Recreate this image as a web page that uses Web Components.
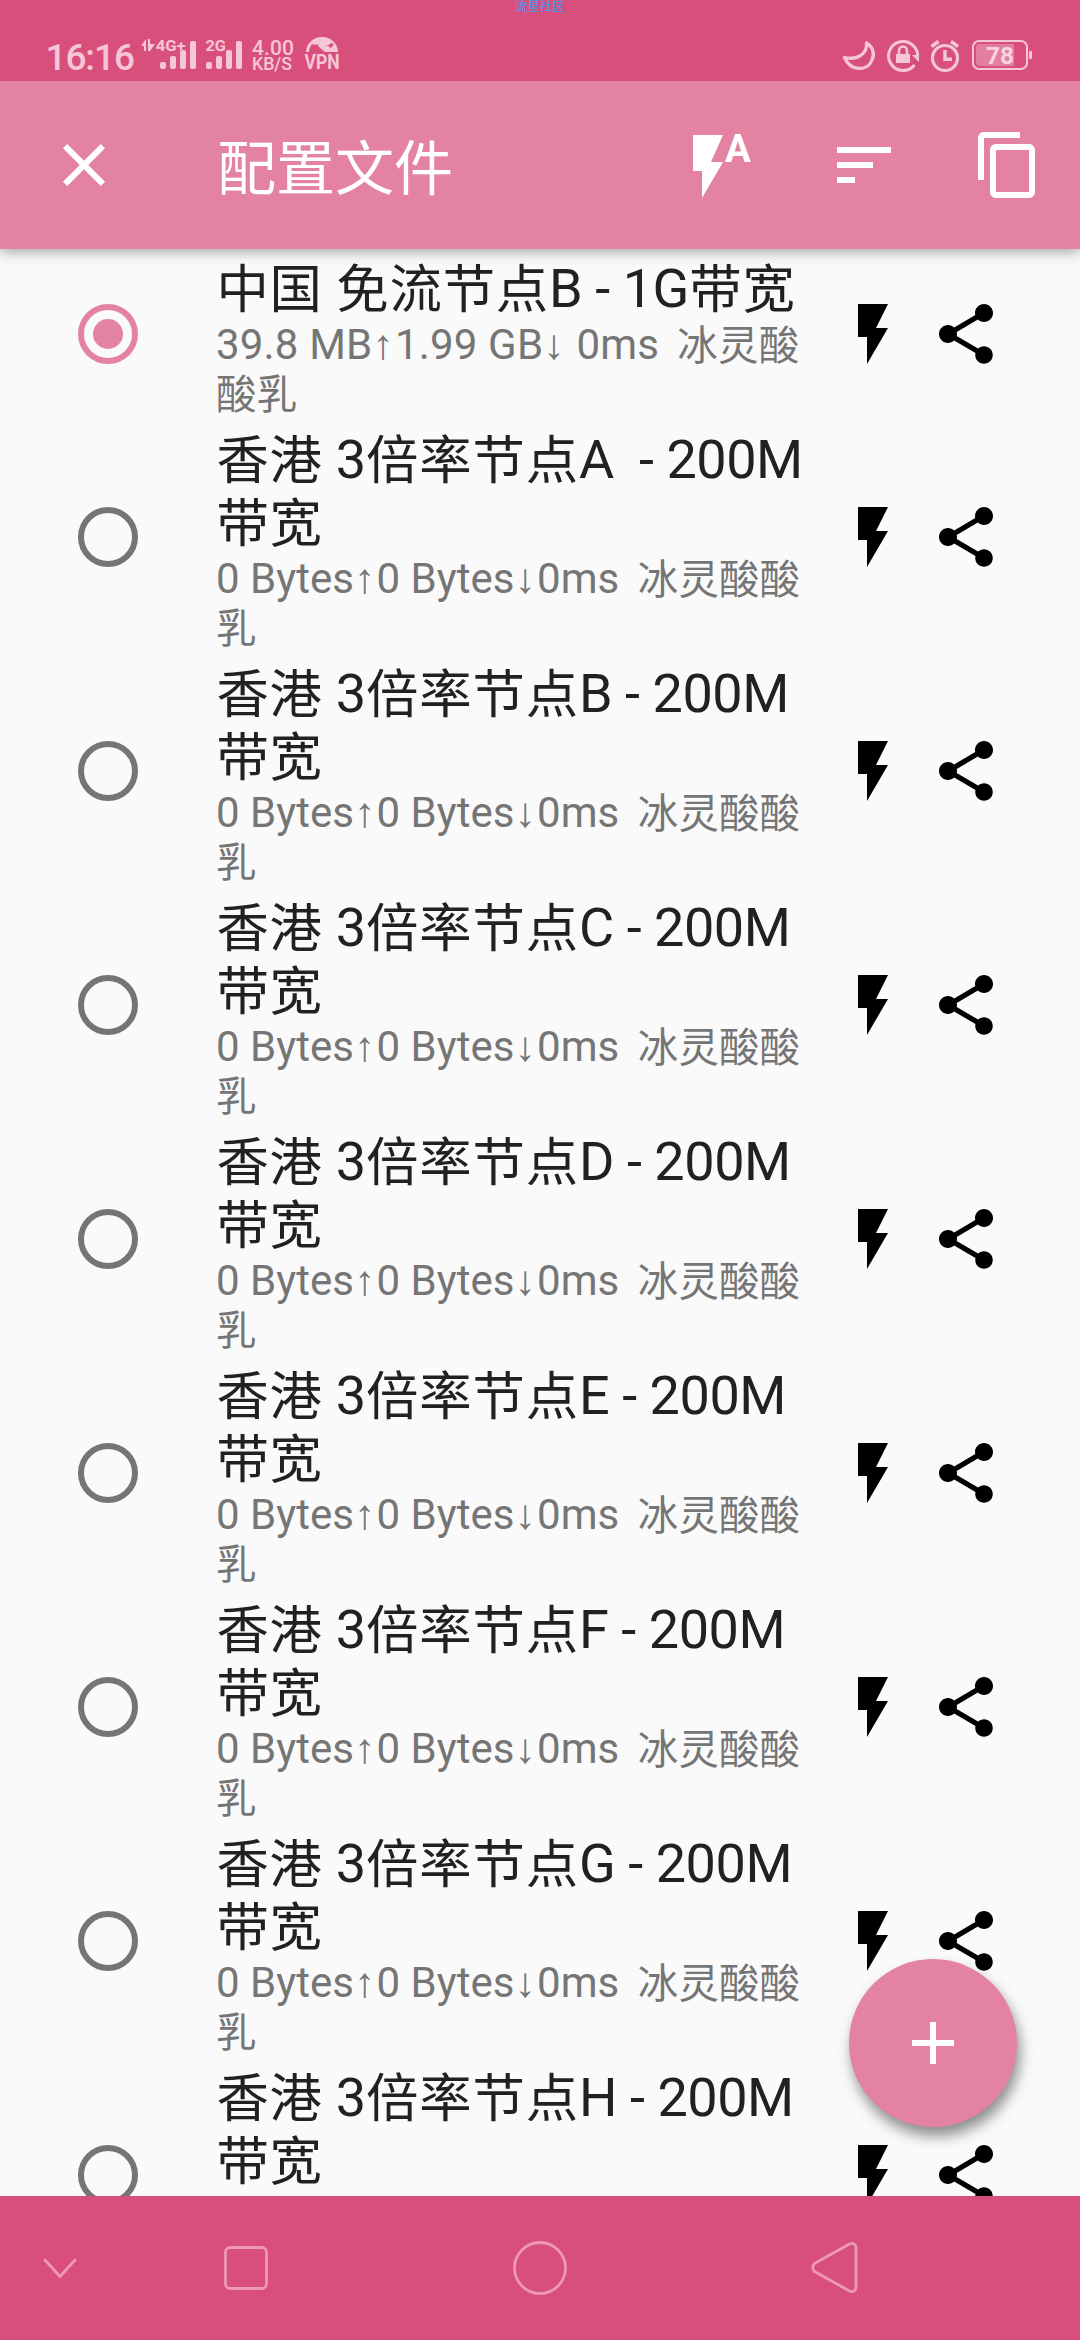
<!DOCTYPE html>
<html lang="zh-CN">
<head>
<meta charset="utf-8">
<title>配置文件</title>
<style>
html,body{margin:0;padding:0;background:#fafafa}
body{font-family:Roboto,"Liberation Sans","Noto Sans CJK SC",sans-serif}
</style>
</head>
<body>
<profile-screen></profile-screen>
<script>
const define = (name, css, html) => customElements.define(name, class extends HTMLElement {
  connectedCallback() {
    if (this.shadowRoot) return;
    const root = this.attachShadow({mode: 'open'});
    root.innerHTML = `<style>${css}svg{display:block;flex:none}</style>` + (typeof html === 'function' ? html(this) : html);
  }
});
/* Chinese glyphs (.c), arrows (.a) and double spaces (.g) have their own tracking beside Latin text. */
const mix = s => s.replace(/[\u4e00-\u9fff]+|[↑↓]|  /g, m =>
  `<span class="${m === '  ' ? 'g' : /[↑↓]/.test(m) ? 'a' : 'c'}">${m}</span>`);
const cjk = '.c{font-size:var(--c);letter-spacing:var(--cs);line-height:1;vertical-align:-1px}.a{letter-spacing:1.6px}.g{letter-spacing:var(--gs)}';

define('status-bar', `
:host{display:flex;flex-direction:column;height:81px;background:#d94f7c;color:#f5c6d7;position:relative;z-index:3}
.mark{height:12px;display:flex;justify-content:center;font:12.4px/12px "Noto Sans CJK SC",sans-serif;color:#3b9cf2}
.row{display:flex;padding:24px 48px 0 47px;height:36px}
svg{fill:currentColor;overflow:visible}
svg+svg{margin-left:var(--g,8px)}
text{font-family:Roboto,sans-serif}
.push{margin-left:auto!important}
`, `
<div class="mark"><span>流星社区</span></div>
<div class="row">
<svg width="90" height="36" viewBox="47 36 90 36"><text x="45.500" y="70" font-size="37" font-weight="500" textLength="89.500">16:16</text></svg>
<svg style="--g:4px" width="56" height="36" viewBox="141 36 56 36"><path d="M141 46l5-7v12h-2v-5zM148 39h2v5h5l-5 7h-2z"/><text x="155.700" y="51" font-size="15.500" font-weight="700" textLength="30" lengthAdjust="spacingAndGlyphs">4G+</text><rect x="160" y="62" width="6" height="7" rx="2"/><rect x="170" y="56" width="6" height="13" rx="2"/><rect x="180" y="50" width="6" height="19" rx="2"/><rect x="190" y="41" width="6" height="28" rx="2"/></svg>
<svg style="--g:8px" width="38" height="36" viewBox="205 36 38 36"><text x="205.500" y="51" font-size="15.500" font-weight="700" textLength="20.500" lengthAdjust="spacingAndGlyphs">2G</text><rect x="206" y="62" width="6" height="7" rx="2"/><rect x="216" y="56" width="6" height="13" rx="2"/><rect x="226" y="50" width="6" height="19" rx="2"/><rect x="236" y="41" width="6" height="28" rx="2"/></svg>
<svg style="--g:9px" width="42" height="36" viewBox="252 36 42 36"><text x="252" y="55" font-size="21" font-weight="500" textLength="42">4.00</text><text x="252" y="70" font-size="18" font-weight="500" textLength="40" lengthAdjust="spacingAndGlyphs">KB/S</text></svg>
<svg style="--g:11px" width="35" height="36" viewBox="305 36 35 36"><path fill-rule="evenodd" d="M306 52a16 15 0 0 1 32 0h-13l-5-4-3-4-2 1-3-1a13 13 0 0 0-3 8zM325 46l3 0 3 2 3-4 1 5-1-5-3-1-2 2z"/><text x="304.500" y="69" font-size="21" font-weight="700" textLength="35" lengthAdjust="spacingAndGlyphs">VPN</text></svg>
<svg class="push" width="32" height="36" viewBox="843 36 32 36"><path fill="none" stroke="currentColor" stroke-width="3.300" stroke-linejoin="round" d="M866.500 43C873 47 875 54 872 60c-4 11-21 12.500-27.500-2.500 13 3 23-4 22-14.500z"/></svg>
<svg style="--g:12px" width="32" height="36" viewBox="887 36 32 36"><path fill="none" stroke="currentColor" stroke-width="3" d="M914.500 65a14.500 14.500 0 1 1 3-7"/><path d="M912 55h7v7zM896 54h14v9h-14z"/><path fill="none" stroke="currentColor" stroke-width="2.600" d="M899 54v-3.500a4 4 0 0 1 8 0V54"/></svg>
<svg style="--g:11px" width="30" height="36" viewBox="930 36 30 36"><g fill="none" stroke="currentColor"><circle cx="945" cy="58" r="12.500" stroke-width="3.200"/><path stroke-width="3.500" d="M945 50v9.300h7M931.500 46.500l7-5M951 41.500l7 5"/></g></svg>
<svg style="--g:12px" width="60" height="36" viewBox="972 36 60 36"><rect x="973" y="41" width="54" height="28" rx="6" fill="none" stroke="currentColor" stroke-width="2"/><path fill="#e27ea0" d="M980 44h34v22h-34q-4 0-4-4V48q0-4 4-4z"/><rect x="1029" y="51" width="3" height="8" rx="1"/><text x="986" y="64" font-size="24" font-weight="700" fill="#f8d3e0" textLength="28" lengthAdjust="spacingAndGlyphs">78</text></svg>
</div>`);

const ICONS = {
  close: '<path d="M19 6.410L17.590 5 12 10.590 6.410 5 5 6.410 10.590 12 5 17.590 6.410 19 12 13.410 17.590 19 19 17.590 13.410 12z"/>',
  auto: '<path d="M3 2v12h3v9l7-12H9l4-9z"/><text x="13.700" y="11" font-family="Roboto,sans-serif" font-weight="700" font-size="12.660" textLength="8.600" lengthAdjust="spacingAndGlyphs">A</text>',
  sort: '<path d="M3 18h6v-2H3v2zM3 6v2h18V6H3zm0 7h12v-2H3v2z"/>',
  copy: '<path d="M16 1H4c-1.100 0-2 .9-2 2v14h2V3h12V1zm3 4H8c-1.100 0-2 .9-2 2v14c0 1.100.9 2 2 2h11c1.100 0 2-.9 2-2V7c0-1.100-.9-2-2-2zm0 16H8V7h11v14z"/>',
  flash: '<path d="M7 2v11h3v9l7-12h-4l4-8z"/>',
  share: '<path d="M18 16.080c-.76 0-1.440.3-1.960.77L8.910 12.700c.05-.23.09-.46.09-.7s-.04-.47-.09-.7l7.050-4.110c.54.5 1.250.81 2.040.81 1.660 0 3-1.340 3-3s-1.340-3-3-3-3 1.340-3 3c0 .24.04.47.09.7L8.040 9.810C7.500 9.310 6.790 9 6 9c-1.660 0-3 1.340-3 3s1.340 3 3 3c.79 0 1.500-.31 2.040-.81l7.120 4.160c-.05.21-.08.43-.08.65 0 1.610 1.310 2.920 2.920 2.920s2.920-1.310 2.920-2.920-1.310-2.920-2.920-2.920z"/>',
  add: '<path d="M19 13h-6v6h-2v-6H5v-2h6V5h2v6h6v2z"/>',
  radio: '<circle cx="12" cy="12" r="9" fill="none" stroke="currentColor" stroke-width="2"/>',
  radioOn: '<circle cx="12" cy="12" r="9" fill="none" stroke="currentColor" stroke-width="2"/><circle cx="12" cy="12" r="5"/>'
};
define('md-icon', ':host{display:block;width:72px;height:72px;flex:none}svg{fill:currentColor}',
  el => `<svg width="72" height="72" viewBox="0 0 24 24">${ICONS[el.getAttribute('name')]}</svg>`);

define('app-bar', `
:host{display:flex;align-items:center;box-sizing:border-box;height:168px;padding:0 36px 0 48px;background:#e482a2;color:#fff;box-shadow:0 3px 12px rgba(0,0,0,.34);position:relative;z-index:2;--c:.985em;--cs:-.1px}
h1{margin:0 auto 0 97px;padding-top:7px;font-weight:400;font-size:60px;line-height:70px;white-space:pre}
.actions{display:flex;gap:72px}${cjk}
`, `<md-icon name="close"></md-icon><h1>${mix('配置文件')}</h1>
<div class="actions"><md-icon name="auto"></md-icon><md-icon name="sort"></md-icon><md-icon name="copy"></md-icon></div>`);

define('profile-row', `
:host{display:flex;align-items:center;box-sizing:border-box;padding-left:72px;color:#757575}
.text{width:621px;margin-left:72px;padding:8px 0 2px;white-space:pre}
.title{font-size:54px;line-height:63px;color:#212121;letter-spacing:-.45px;--c:.97em;--cs:.85px;--gs:-.8px}
.title .c{margin-left:.4px}
.sub{font-size:42px;line-height:49px;letter-spacing:.02px;--c:.964em;--cs:.1px;--gs:-1.1px}
.line{display:block}
.actions{display:flex;gap:21px;color:#000}
:host([checked]) .radio{color:#e482a2}
:host([checked]) .radio,:host([checked]) .actions{margin-bottom:1px}
:host([checked]) .sub{letter-spacing:.17px;--cs:.2px;--gs:-1.3px}${cjk}
`, el => {
  const lines = a => el.getAttribute(a).split('|').map(t => `<span class="line">${mix(t)}</span>`).join('');
  return `<md-icon class="radio" name="${el.hasAttribute('checked') ? 'radioOn' : 'radio'}"></md-icon>
<div class="text"><div class="title">${lines('heading')}</div><div class="sub">${lines('stats')}</div></div>
<div class="actions"><md-icon name="flash"></md-icon><md-icon name="share"></md-icon></div>`;
});

define('nav-bar', `
:host{display:block;height:144px;background:#d94f7c;color:#ed98b5}
.row{display:flex;align-items:center;height:144px;padding-left:42px}
svg{fill:none;stroke:currentColor;stroke-width:2.800;stroke-linecap:round;stroke-linejoin:round}
`, `<div class="row">
<svg width="36" height="60" viewBox="0 0 36 60"><path d="M3 22l15 16.500L33 22"/></svg>
<svg style="margin-left:138px" width="60" height="60" viewBox="0 0 60 60"><rect x="9.500" y="9.500" width="41" height="41" rx="4.500"/></svg>
<svg style="margin-left:234px" width="60" height="60" viewBox="0 0 60 60"><circle cx="30" cy="30" r="25.500"/></svg>
<svg style="margin-left:234px" width="60" height="60" viewBox="0 0 60 60"><path d="M10.500 25.500L45 6.300Q49.500 4 51.500 7.500 52 8.500 52 10V49Q52 51.500 50 53 47.500 54.500 45 52.700L10.500 33.500Q7 29.500 10.500 25.500z"/></svg>
</div>`);

define('fab-button', `
:host{display:flex;align-items:center;justify-content:center;width:168px;height:168px;border-radius:50%;background:#e482a2;color:#fff;box-shadow:3px 9px 14px rgba(0,0,0,.44)}
`, '<md-icon name="add"></md-icon>');

define('profile-screen', `
:host{display:flex;flex-direction:column;width:1080px;height:2340px;overflow:hidden;background:#fafafa;position:relative}
main{flex:1;min-height:0;overflow:hidden}
fab-button{position:absolute;right:63px;bottom:213px}
`, () => `<status-bar></status-bar><app-bar></app-bar><main>
<profile-row checked heading="中国 免流节点B - 1G带宽" stats="39.8 MB↑1.99 GB↓ 0ms  冰灵酸|酸乳"></profile-row>
${[...'ABCDEFG'].map(k => `<profile-row heading="香港 3倍率节点${k === 'A' ? 'A ' : k} - 200M|带宽" stats="0 Bytes↑0 Bytes↓0ms  冰灵酸酸|乳"></profile-row>`).join('')}
<profile-row heading="香港 3倍率节点H - 200M|带宽" stats=" | "></profile-row>
</main><fab-button></fab-button><nav-bar></nav-bar>`);
</script>
</body>
</html>
